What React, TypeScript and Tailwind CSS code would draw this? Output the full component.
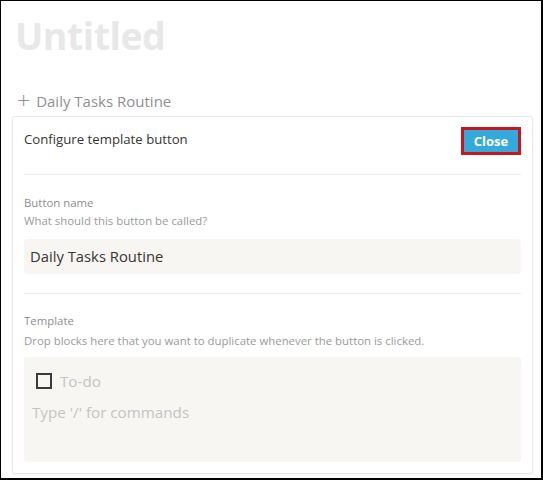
export default function App() {
  return (
    <div
      className="w-[543px] h-[480px] bg-white border-l border-t border-r-2 border-b-2 border-black overflow-hidden"
      style={{ fontFamily: '"Open Sans", "Noto Sans", sans-serif' }}
    >
      <h1 className="pl-[14px] pt-[10px] h-[58px] text-[37.5px] leading-[50px] font-bold text-[#e8e8e8] tracking-[-0.5px]">
        Untitled
      </h1>
      <div className="mt-[29px] flex items-center pl-[16px] h-[26px] text-[15px] text-[#8f8f8f]">
        <span className="text-[23px] font-light leading-none mr-[6px] -mt-[2px]">+</span>
        <span>Daily Tasks Routine</span>
      </div>
      <div className="ml-[11px] mt-[2px] w-[521px] h-[358px] rounded-[3px] border border-[#e8e8e8] shadow-[0_1px_2px_rgba(0,0,0,0.06)] px-[11px]">
        <div className="flex items-start justify-between h-[58px] border-b border-[#ececec]">
          <span className="mt-[13px] text-[13.2px] text-[#37352f]">Configure template button</span>
          <div className="mt-[10px] border-[3px] border-[#c8161d] ">
            <button className="block w-[54px] h-[22px] bg-[#36a9dc] text-white text-[13px] font-bold leading-[22px] text-center">
              Close
            </button>
          </div>
        </div>
        <div className="pt-[19px] pb-[19px] border-b border-[#ececec]">
          <div className="text-[11.4px] text-[#8e8e8e] leading-[18px]">Button name</div>
          <div className="text-[11.4px] text-[#9a9a9a] leading-[18px]">What should this button be called?</div>
          <div className="mt-[9px] h-[35px] bg-[#f7f6f3] rounded-[3px] flex items-center pl-[6px] text-[14.8px] text-[#37352f]">
            Daily Tasks Routine
          </div>
        </div>
        <div className="pt-[18px]">
          <div className="text-[11.4px] text-[#8e8e8e] leading-[18px]">Template</div>
          <div className="mt-[2px] text-[11.4px] text-[#9a9a9a] leading-[18px]">
            Drop blocks here that you want to duplicate whenever the button is clicked.
          </div>
          <div className="mt-[7px] h-[105px] bg-[#f7f6f3] rounded-[3px] pt-[14px] pl-[12px]">
            <div className="flex items-center h-[20px]">
              <span className="w-[16px] h-[16px] border-2 border-[#3a3a3a]" />
              <span className="ml-[8px] text-[15.2px] text-[#c4c4c4]">To-do</span>
            </div>
            <div className="mt-[10px] -ml-[4px] text-[15.2px] text-[#c4c4c4]">Type '/' for commands</div>
          </div>
        </div>
      </div>
    </div>
  );
}
